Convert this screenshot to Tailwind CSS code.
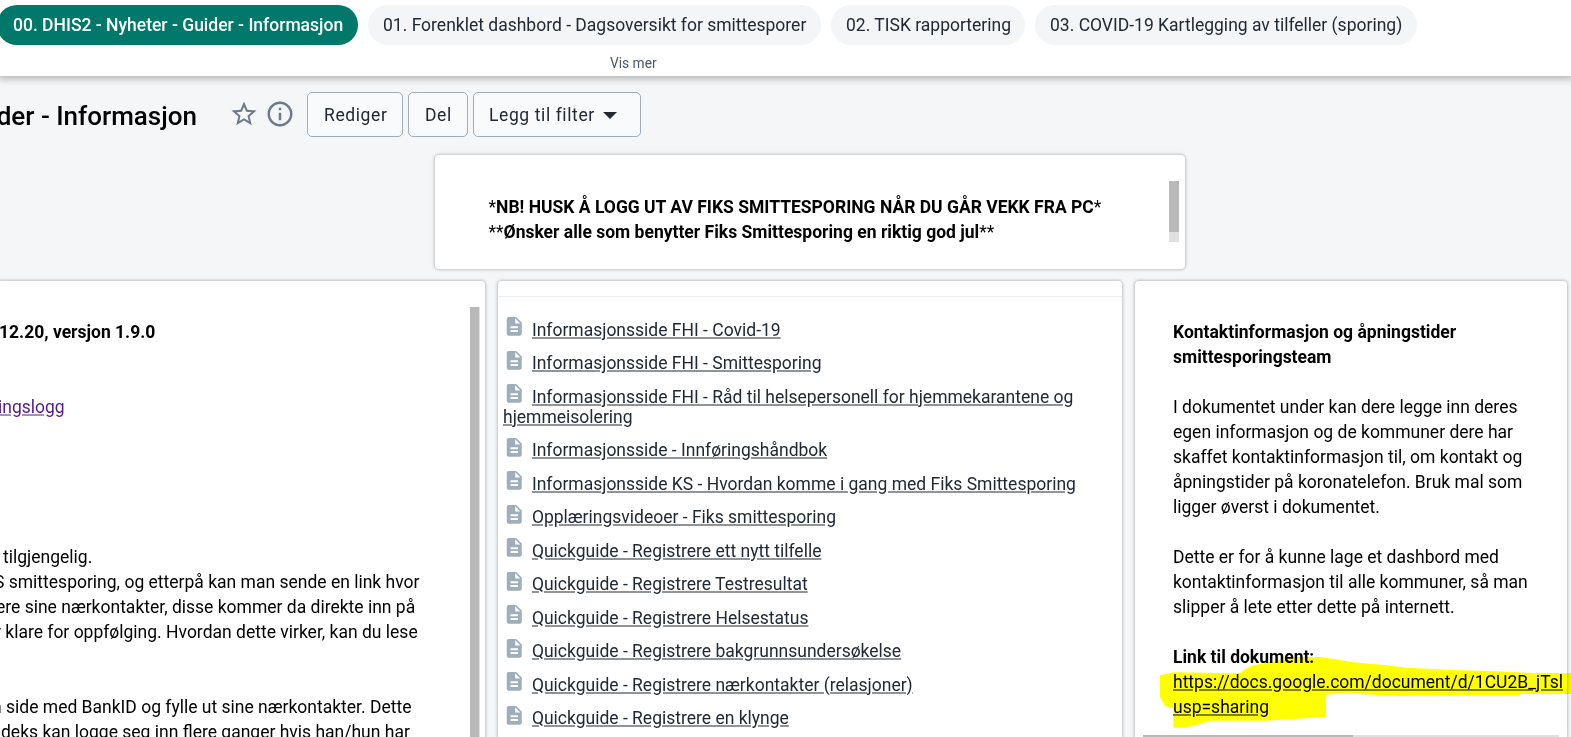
<!DOCTYPE html>
<html lang="no">
<head>
<meta charset="utf-8">
<title>Dashboard</title>
<script src="https://cdn.jsdelivr.net/npm/@tailwindcss/browser@4"></script>
</head>
<body class="h-[737px] w-[1571px] overflow-hidden bg-[#f4f6f8] font-[Roboto,sans-serif] text-[17.5px] leading-[25px] text-black">
<svg class="hidden"><symbol id="doc" viewBox="0 0 24 24"><path fill="#a0adba" d="M14 2H6c-1.1 0-1.99.9-1.99 2L4 20c0 1.1.89 2 1.99 2H18c1.1 0 2-.9 2-2V8l-6-6zm2 16H8v-2h8v2zm0-4H8v-2h8v2zm-3-5V3.500L18.500 9H13z"/></symbol></svg>
<div class="flex h-full flex-col">
  <header class="relative flex h-[76px] shrink-0 flex-col bg-white pt-[5px] shadow-[0_0_8px_2px_rgba(0,0,0,0.32)]">
    <nav class="-ml-[3px] flex h-10 gap-[10px] whitespace-nowrap text-[#212934]">
      <a class="flex w-[361px] shrink-0 items-center rounded-full bg-[#00796b] pl-4 font-medium text-white">00. DHIS2 - Nyheter - Guider - Informasjon</a>
      <a class="flex w-[453px] shrink-0 items-center rounded-full bg-[#f3f5f7] pl-[15px]">01. Forenklet dashbord - Dagsoversikt for smittesporer</a>
      <a class="flex w-[194px] shrink-0 items-center rounded-full bg-[#f3f5f7] pl-[15px]">02. TISK rapportering</a>
      <a class="flex w-[382px] shrink-0 items-center rounded-full bg-[#f3f5f7] pl-[15px]">03. COVID-19 Kartlegging av tilfeller (sporing)</a>
    </nav>
    <div class="pt-[8px] pl-[610px] text-[13.75px] leading-5 text-[#4a5768]">Vis mer</div>
  </header>

  <div class="flex h-[61px] shrink-0 items-end">
    <h1 class="flex w-[197px] shrink-0 justify-end whitespace-nowrap pb-[4px] text-[26px] leading-[34px] font-medium">der - Informasjon</h1>
    <svg class="mb-[8px] ml-[32px] size-[30px]" viewBox="0 0 24 24" fill="#6e7a8a"><path d="M22 9.240l-7.190-.62L12 2 9.190 8.630 2 9.240l5.460 4.730L5.820 21 12 17.270 18.180 21l-1.630-7.030L22 9.240zM12 15.400l-3.760 2.270 1-4.280-3.320-2.880 4.380-.38L12 6.100l1.710 4.040 4.380.38-3.320 2.880 1 4.280L12 15.400z"/></svg>
    <svg class="mb-[8px] ml-[6px] size-[30px]" viewBox="0 0 24 24" fill="#6e7a8a"><path d="M11 17h2v-6h-2v6zm1-15C6.480 2 2 6.480 2 12s4.480 10 10 10 10-4.480 10-10S17.520 2 12 2zm0 18c-4.410 0-8-3.590-8-8s3.590-8 8-8 8 3.590 8 8-3.590 8-8 8zM11 9h2V7h-2v2z"/></svg>
    <div class="ml-[12px] flex h-[45px] gap-[5px] tracking-[0.6px] text-[#212934]">
      <button class="flex w-[96px] items-center rounded-[5px] border border-[#a0adba] bg-[#f9fafb] pt-[2px] pl-4">Rediger</button>
      <button class="flex w-[60px] items-center rounded-[5px] border border-[#a0adba] bg-[#f9fafb] pt-[2px] pl-4">Del</button>
      <button class="flex w-[168px] items-center rounded-[5px] border border-[#a0adba] bg-[#f9fafb] pt-[2px] pl-[15px]">Legg til filter<svg class="ml-[8px] h-[7px] w-[14px]" viewBox="0 0 14 7"><path d="M0 0h14L7 7z" fill="#212934"/></svg></button>
    </div>
  </div>

  <main class="flex flex-1 flex-col">
    <section class="mt-[18px] ml-[435px] flex h-[114px] w-[750px] shrink-0 justify-between rounded-[4px] bg-white pt-[26px] pr-[6px] pl-[53.500px] shadow-[0_0_3px_1px_rgba(0,0,0,0.22)]">
      <div class="pt-[14px] whitespace-nowrap">
        <p>*<b class="font-bold">NB! HUSK Å LOGG UT AV FIKS SMITTESPORING NÅR DU GÅR VEKK FRA PC</b>*</p>
        <p>**<b class="font-bold">Ønsker alle som benytter Fiks Smittesporing en riktig god jul</b>**</p>
      </div>
      <div class="h-[61px] w-[10px] bg-[#e0e0e0]"><div class="h-[51px] bg-[#b9b9b9]"></div></div>
    </section>

    <div class="mt-[12px] flex flex-1 gap-[13px]">
      <section class="flex w-[485px] shrink-0 justify-between rounded-tr-[4px] bg-white pt-[26px] pr-[5px] shadow-[0_0_3px_1px_rgba(0,0,0,0.22)]">
        <div class="h-[430px] w-[460px] pt-[13px] whitespace-nowrap">
          <p class="-ml-[1px] font-bold">12.20, versjon 1.9.0</p>
          <p class="mt-[50px] -ml-[2px] text-[#551a8b]"><a class="underline decoration-[#551a8b]/50 decoration-2">ingslogg</a></p>
          <p class="mt-[125px] pl-[3px]">tilgjengelig.</p>
          <p class="-ml-[6px]">S smittesporing, og etterpå kan man sende en link hvor</p>
          <p class="-ml-[4px]">ere sine nærkontakter, disse kommer da direkte inn på</p>
          <p class="-ml-[5px]">r klare for oppfølging. Hvordan dette virker, kan du lese</p>
          <p class="mt-[50px] -ml-[8px]">n side med BankID og fylle ut sine nærkontakter. Dette</p>
          <p class="pl-[1px]">deks kan logge seg inn flere ganger hvis han/hun har</p>
        </div>
        <div class="w-[10px] border-r border-[#e0e0e0] bg-[#b9b9b9]"></div>
      </section>

      <section class="w-[624px] shrink-0 rounded-t-[4px] bg-white shadow-[0_0_3px_1px_rgba(0,0,0,0.22)]">
        <div class="h-[16px] border-b border-[#eceff3]"></div>
        <ul class="flex flex-col gap-[13.5px] pt-[22.6px] pl-[5px] leading-5 whitespace-nowrap text-[#212934]">
          <li><svg class="-mt-3 mr-[6.4px] -mb-1 inline-block size-[22.5px] align-[2px]"><use href="#doc"/></svg><a class="underline decoration-[#212934]/50 decoration-2">Informasjonsside FHI - Covid-19</a></li>
          <li><svg class="-mt-3 mr-[6.4px] -mb-1 inline-block size-[22.5px] align-[2px]"><use href="#doc"/></svg><a class="underline decoration-[#212934]/50 decoration-2">Informasjonsside FHI - Smittesporing</a></li>
          <li><svg class="-mt-3 mr-[6.4px] -mb-1 inline-block size-[22.5px] align-[2px]"><use href="#doc"/></svg><a class="underline decoration-[#212934]/50 decoration-2">Informasjonsside FHI - Råd til helsepersonell for hjemmekarantene og<br>hjemmeisolering</a></li>
          <li><svg class="-mt-3 mr-[6.4px] -mb-1 inline-block size-[22.5px] align-[2px]"><use href="#doc"/></svg><a class="underline decoration-[#212934]/50 decoration-2">Informasjonsside - Innføringshåndbok</a></li>
          <li><svg class="-mt-3 mr-[6.4px] -mb-1 inline-block size-[22.5px] align-[2px]"><use href="#doc"/></svg><a class="underline decoration-[#212934]/50 decoration-2">Informasjonsside KS - Hvordan komme i gang med Fiks Smittesporing</a></li>
          <li><svg class="-mt-3 mr-[6.4px] -mb-1 inline-block size-[22.5px] align-[2px]"><use href="#doc"/></svg><a class="underline decoration-[#212934]/50 decoration-2">Opplæringsvideoer - Fiks smittesporing</a></li>
          <li><svg class="-mt-3 mr-[6.4px] -mb-1 inline-block size-[22.5px] align-[2px]"><use href="#doc"/></svg><a class="underline decoration-[#212934]/50 decoration-2">Quickguide - Registrere ett nytt tilfelle</a></li>
          <li><svg class="-mt-3 mr-[6.4px] -mb-1 inline-block size-[22.5px] align-[2px]"><use href="#doc"/></svg><a class="underline decoration-[#212934]/50 decoration-2">Quickguide - Registrere Testresultat</a></li>
          <li><svg class="-mt-3 mr-[6.4px] -mb-1 inline-block size-[22.5px] align-[2px]"><use href="#doc"/></svg><a class="underline decoration-[#212934]/50 decoration-2">Quickguide - Registrere Helsestatus</a></li>
          <li><svg class="-mt-3 mr-[6.4px] -mb-1 inline-block size-[22.5px] align-[2px]"><use href="#doc"/></svg><a class="underline decoration-[#212934]/50 decoration-2">Quickguide - Registrere bakgrunnsundersøkelse</a></li>
          <li><svg class="-mt-3 mr-[6.4px] -mb-1 inline-block size-[22.5px] align-[2px]"><use href="#doc"/></svg><a class="underline decoration-[#212934]/50 decoration-2">Quickguide - Registrere nærkontakter (relasjoner)</a></li>
          <li><svg class="-mt-3 mr-[6.4px] -mb-1 inline-block size-[22.5px] align-[2px]"><use href="#doc"/></svg><a class="underline decoration-[#212934]/50 decoration-2">Quickguide - Registrere en klynge</a></li>
        </ul>
      </section>

      <section class="flex w-[432px] shrink-0 flex-col justify-between rounded-t-[4px] bg-white pt-[39px] shadow-[0_0_3px_1px_rgba(0,0,0,0.22)]">
        <div class="h-[400px] pl-[38px] whitespace-nowrap">
          <p class="font-bold">Kontaktinformasjon og åpningstider<br>smittesporingsteam</p>
          <p class="mt-[25px]">I dokumentet under kan dere legge inn deres<br>egen informasjon og de kommuner dere har<br>skaffet kontaktinformasjon til, om kontakt og<br>åpningstider på koronatelefon. Bruk mal som<br>ligger øverst i dokumentet.</p>
          <p class="mt-[25px]">Dette er for å kunne lage et dashbord med<br>kontaktinformasjon til alle kommuner, så man<br>slipper å lete etter dette på internett.</p>
          <p class="mt-[25px] font-bold">Link til dokument:</p>
          <p><a class="underline decoration-black/50 decoration-2">https://docs.google.com/document/d/1CU2B_jTsl<br>usp=sharing</a></p>
        </div>
        <div class="mr-[8px] ml-[8px] h-[2px] bg-[#e0e0e0]"><div class="h-full w-[210px] bg-[#b9b9b9]"></div></div>
      </section>
    </div>
  </main>
</div>
<!-- marker-pen highlight over the document link -->
<svg class="absolute top-[600px] left-[1120px] h-[137px] w-[451px] mix-blend-multiply" viewBox="0 0 1353 411"><path fill="#ff0" d="M120 226L160 217 330 220 362 218 378 206 400 196 440 188 490 178 520 171H600L645 178 700 187 800 196 860 203 1000 210 1130 214 1240 219H1353V282H1200V286L1100 286 830 288 675 280 618 284V351L440 362H270L220 378 190 383H160V325L135 318 120 292Z"/></svg>
</body>
</html>
